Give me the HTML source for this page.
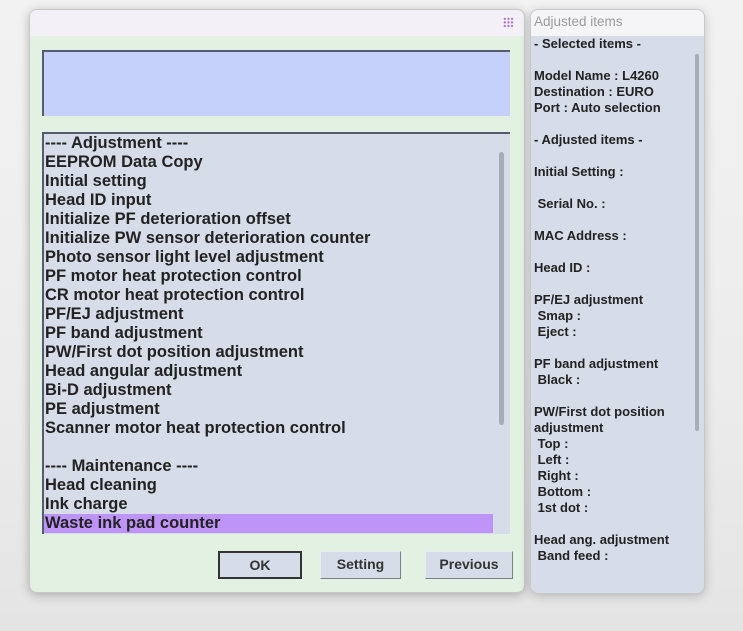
<!DOCTYPE html>
<html><head><meta charset="utf-8"><style>
*{margin:0;padding:0;box-sizing:border-box}
body{width:743px;height:631px;overflow:hidden;position:relative;font-family:"Liberation Sans",Arial,sans-serif;background:linear-gradient(180deg,#f2f2f2 0%,#ececec 60%,#e4e4e4 100%)}
.win{position:absolute;left:29px;top:9px;width:496px;height:584px;border-radius:8px;background:#e2f1e2;box-shadow:0 2px 10px rgba(0,0,0,.25);overflow:hidden;border:1px solid #c8c8c8}
.tb{height:26px;background:#f3f0f7}
.dots{position:absolute;right:10px;top:7px;width:11px;height:11px;background-image:radial-gradient(circle,#b070c8 1px,transparent 1.3px);background-size:3.6px 3.6px}
.blue{position:absolute;left:12px;top:40px;width:468px;height:66px;background:#c5d0fb;border-top:2px solid #555c6e;border-left:2px solid #555c6e}
.list{position:absolute;left:12px;top:122px;width:468px;height:402px;background:#d6dce8;border-top:2px solid #555c6e;border-left:2px solid #555c6e;color:#222;font-weight:bold;font-size:16.5px}
.list .it{height:19px;line-height:19px;padding-left:1px;white-space:nowrap}
.list .sel{background:#bf94f8;width:449px}
.sb{position:absolute;left:455px;top:18px;width:5px;height:273px;background:#a7acb6;border-radius:3px}
.btn{position:absolute;top:541px;height:28px;background:#d6dce8;border:1px solid #7a7f88;border-top-color:#e8ecf3;border-left-color:#e8ecf3;font-weight:bold;font-size:14px;color:#333;text-align:center;line-height:25px}
.rp{position:absolute;left:530px;top:9px;width:175px;height:585px;border-radius:8px;background:#d6dce8;box-shadow:0 2px 10px rgba(0,0,0,.2);overflow:hidden;border:1px solid #c8c8c8}
.rt{height:26px;background:#f5f5f8;color:#9a9a9a;font-size:13.5px;line-height:24px;padding-left:3px}
.rc{position:absolute;left:3px;top:26px;font-weight:bold;font-size:13px;color:#222;line-height:16px;white-space:pre}
.rsb{position:absolute;left:164px;top:44px;width:4px;height:377px;background:#a7acb6;border-radius:2px}
</style></head><body>
<div class="win">
<div class="tb"></div><div class="dots"></div>
<div class="blue"></div>
<div class="list">
<div class="it">---- Adjustment ----</div>
<div class="it">EEPROM Data Copy</div>
<div class="it">Initial setting</div>
<div class="it">Head ID input</div>
<div class="it">Initialize PF deterioration offset</div>
<div class="it">Initialize PW sensor deterioration counter</div>
<div class="it">Photo sensor light level adjustment</div>
<div class="it">PF motor heat protection control</div>
<div class="it">CR motor heat protection control</div>
<div class="it">PF/EJ adjustment</div>
<div class="it">PF band adjustment</div>
<div class="it">PW/First dot position adjustment</div>
<div class="it">Head angular adjustment</div>
<div class="it">Bi-D adjustment</div>
<div class="it">PE adjustment</div>
<div class="it">Scanner motor heat protection control</div>
<div class="it"></div>
<div class="it">---- Maintenance ----</div>
<div class="it">Head cleaning</div>
<div class="it">Ink charge</div>
<div class="it sel">Waste ink pad counter</div>
<div class="sb"></div>
</div>
<div class="btn" style="left:188px;width:84px;border:2px solid #333">OK</div>
<div class="btn" style="left:290px;width:81px">Setting</div>
<div class="btn" style="left:395px;width:88px">Previous</div>
</div>
<div class="rp">
<div class="rt">Adjusted items</div>
<div class="rc">- Selected items -

Model Name : L4260
Destination : EURO
Port : Auto selection

- Adjusted items -

Initial Setting :

 Serial No. :

MAC Address :

Head ID :

PF/EJ adjustment
 Smap :
 Eject :

PF band adjustment
 Black :

PW/First dot position
adjustment
 Top :
 Left :
 Right :
 Bottom :
 1st dot :

Head ang. adjustment
 Band feed :</div>
<div class="rsb"></div>
</div>
</body></html>
